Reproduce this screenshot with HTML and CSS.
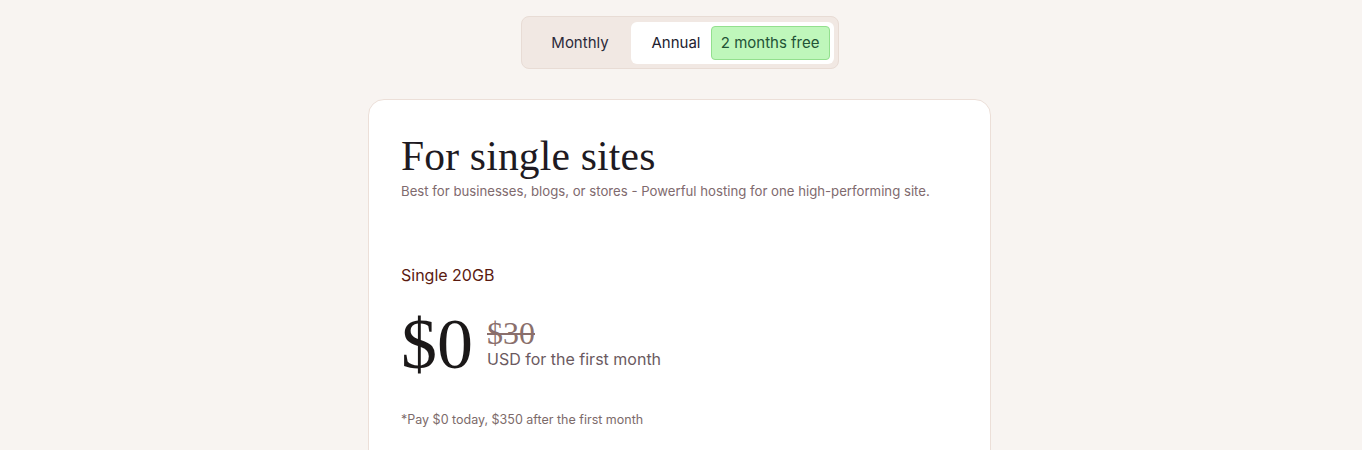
FILE: index.html
```html
<!DOCTYPE html>
<html lang="en">
<head>
<meta charset="utf-8">
<title>Pricing</title>
<link rel="stylesheet" href="styles.css">
</head>
<body>
<main class="page">
  <div class="toggle">
    <button class="toggle-opt">Monthly</button>
    <div class="toggle-active">
      <span class="toggle-label">Annual</span>
      <span class="badge">2 months free</span>
    </div>
  </div>
  <section class="card">
    <h1 class="title">For single sites</h1>
    <p class="subtitle">Best for businesses, blogs, or stores - Powerful hosting for one high-performing site.</p>
    <h2 class="plan">Single 20GB</h2>
    <div class="price-row">
      <span class="price">$0</span>
      <div class="price-meta">
        <span class="old-price">$30</span>
        <span class="period">USD for the first month</span>
      </div>
    </div>
    <p class="note">*Pay $0 today, $350 after the first month</p>
  </section>
</main>
</body>
</html>
```

FILE: styles.css
```css
* { box-sizing: border-box; }
html, body { margin: 0; padding: 0; }
body {
  background: #f8f4f1;
  font-family: Inter, "Noto Sans", sans-serif;
  color: #2b2020;
  height: 450px;
  overflow: hidden;
}
.page {
  display: flex;
  flex-direction: column;
  align-items: center;
  padding-top: 16px;
}
.toggle {
  display: flex;
  align-items: center;
  width: 318px;
  height: 53px;
  padding: 5px 4px 5px 4px;
  background: #f1e8e3;
  border: 1px solid #e8dcd5;
  border-radius: 8px;
  margin-right: 3px;
}
.toggle-opt {
  border: 0;
  background: transparent;
  font: 400 15px Inter, "Noto Sans", sans-serif;
  color: #2c2a3a;
  width: 105px;
  height: 42px;
  padding: 0 0 0 4px;
  margin-right: 0;
}
.toggle-active {
  flex: 1;
  display: flex;
  align-items: center;
  justify-content: space-between;
  height: 42px;
  background: #fff;
  border-radius: 6px;
  padding: 0 4px 0 21px;
}
.toggle-label {
  font-size: 15px;
  font-weight: 400;
  color: #22202e;
}
.badge {
  display: flex;
  align-items: center;
  height: 34px;
  padding: 0 9px;
  background: #bff7bb;
  border: 1px solid #93e08e;
  border-radius: 4px;
  font-size: 15px;
  color: #235336;
}
.card {
  width: 623px;
  margin-top: 30px;
  margin-right: 3px;
  background: #fff;
  border: 1px solid #ecdfd8;
  border-radius: 16px;
  padding: 32px 32px 40px 32px;
  height: 400px;
}
.title {
  margin: 0;
  font-family: "Liberation Serif", "DejaVu Serif", serif;
  font-weight: 400;
  font-size: 41.5px;
  line-height: 48px;
  color: #1e1a22;
  letter-spacing: 0.2px;
}
.subtitle {
  margin: 2px 0 0;
  font-size: 13.2px;
  line-height: 18px;
  color: #806a6e;
}
.plan {
  margin: 64px 0 0;
  font-size: 16px;
  font-weight: 400;
  line-height: 22px;
  color: #5a1a10;
}
.price-row {
  display: flex;
  align-items: flex-end;
  margin-top: 26px;
}
.price {
  font-family: "Liberation Serif", "DejaVu Serif", serif;
  font-size: 72px;
  line-height: 64px;
  color: #1b1818;
  margin-right: 14px;
}
.price-meta {
  display: flex;
  flex-direction: column;
  padding-bottom: 6px;
}
.old-price {
  font-family: "Liberation Serif", "DejaVu Serif", serif;
  font-size: 32px;
  line-height: 30px;
  color: #8a6f6c;
  text-decoration: line-through;
  text-decoration-thickness: 2px;
}
.period {
  font-size: 16px;
  line-height: 22px;
  color: #6b5a5f;
}
.note {
  margin: 36px 0 0;
  font-size: 12.5px;
  color: #7c6a6a;
}
```
